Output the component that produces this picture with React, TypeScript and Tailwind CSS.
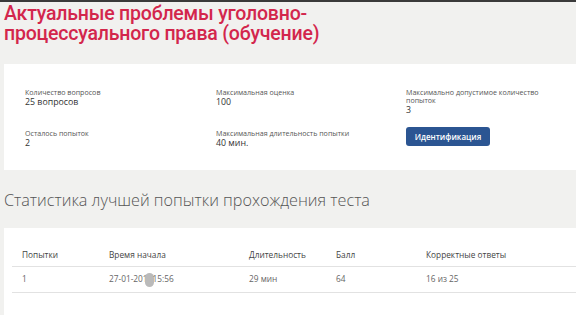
const App: React.FC = () => {
  return (
    <div className="w-[576px] h-[315px] overflow-hidden bg-[#f1f1ef] border-t-2 border-[#3a3a3a] font-['Open_Sans',sans-serif]">
      {/* Title */}
      <h1 className="pl-[4px] pt-[2px] text-[19.5px] leading-[20px] font-medium text-[#d3264c] font-['Roboto',sans-serif] tracking-[-0.2px]">
        Актуальные проблемы уголовно-
        <br />
        процессуального права (обучение)
      </h1>

      {/* Info card */}
      <div className="ml-[4px] mt-[20px] h-[106px] bg-white pl-[21px] pt-[23px] text-[#333]">
        <div className="grid grid-cols-[191px_190px_160px]">
          <div className="h-[41px]">
            <p className="text-[7.1px] leading-[10px] text-[#555]">Количество вопросов</p>
            <p className="text-[8.8px] leading-[10px]">25 вопросов</p>
          </div>
          <div>
            <p className="text-[7.1px] leading-[10px] text-[#555]">Максимальная оценка</p>
            <p className="text-[8.8px] leading-[10px]">100</p>
          </div>
          <div>
            <p className="text-[7.1px] leading-[8px] pt-[1px] pb-[1px] text-[#555] w-[145px]">Максимально допустимое количество попыток</p>
            <p className="text-[8.8px] leading-[10px]">3</p>
          </div>
          <div>
            <p className="text-[7.1px] leading-[10px] text-[#555]">Осталось попыток</p>
            <p className="text-[8.8px] leading-[10px]">2</p>
          </div>
          <div>
            <p className="text-[7.1px] leading-[10px] text-[#555]">Максимальная длительность попытки</p>
            <p className="text-[8.8px] leading-[10px]">40 мин.</p>
          </div>
          <div>
            <button type="button" className="block -mt-[1px] w-[84px] h-[19px] rounded-[3px] bg-[#2b5592] text-white text-[8px] font-semibold">
              Идентификация
            </button>
          </div>
        </div>
      </div>

      {/* Stats heading */}
      <h2 className="pl-[4px] mt-[19px] text-[16.2px] leading-[22px] font-light text-[#555]">
        Статистика лучшей попытки прохождения теста
      </h2>

      {/* Table card */}
      <div className="ml-[4px] mt-[17px] h-[100px] bg-white pl-[8px] pt-[17px]">
        <div className="grid grid-cols-[87px_140px_87px_90px_1fr] pl-[10px] h-[22px] items-center border-b border-[#e2e2e2] text-[8.3px] text-[#444]">
          <p>Попытки</p>
          <p>Время начала</p>
          <p>Длительность</p>
          <p>Балл</p>
          <p>Корректные ответы</p>
        </div>
        <div className="grid grid-cols-[87px_140px_87px_90px_1fr] pl-[10px] h-[26px] items-center border-b border-[#e2e2e2] text-[8.3px] text-[#666]">
          <p>1</p>
          <p className="flex items-center">
            27-01-201
            <span className="inline-block w-[9px] h-[14px] rounded-full bg-[#bababa] -ml-[3px] -mr-[1px]" />
            15:56
          </p>
          <p>29 мин</p>
          <p>64</p>
          <p>16 из 25</p>
        </div>
      </div>
    </div>
  );
};

export default App;
